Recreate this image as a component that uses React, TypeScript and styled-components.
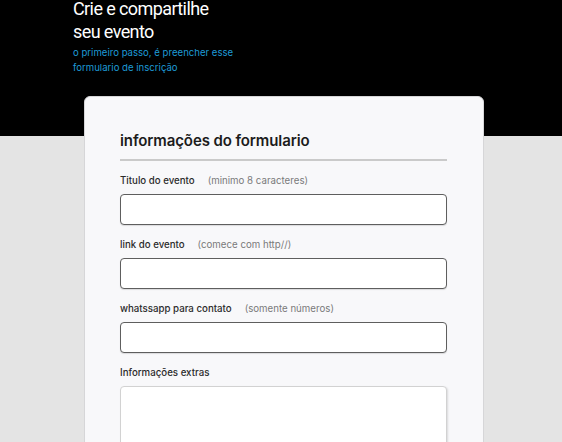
import styled, { createGlobalStyle } from 'styled-components';

const GlobalStyle = createGlobalStyle`
  html, body {
    margin: 0;
    padding: 0;
    background: #e4e4e4;
    font-family: Inter, 'Noto Sans', sans-serif;
    overflow: hidden;
  }
  * {
    box-sizing: border-box;
  }
`;

interface Field {
  label: string;
  hint?: string;
  multiline?: boolean;
}

const fields: Field[] = [
  { label: 'Titulo do evento', hint: '(minimo 8 caracteres)' },
  { label: 'link do evento', hint: '(comece com http//)' },
  { label: 'whatssapp para contato', hint: '(somente números)' },
  { label: 'Informações extras', multiline: true },
];

export default function App() {
  return (
    <Page>
      <GlobalStyle />
      <Hero>
        <HeroTitle>
          Crie e compartilhe
          <br />
          seu evento
        </HeroTitle>
        <HeroSubtitle>
          o primeiro passo, é preencher esse
          <br />
          formulario de inscrição
        </HeroSubtitle>
      </Hero>

      <Main>
        <Card>
          <CardTitle>informações do formulario</CardTitle>
          <Divider />
          {fields.map((field) => (
            <FieldGroup key={field.label}>
              <Label>
                {field.label}
                {field.hint && <Hint>{field.hint}</Hint>}
              </Label>
              {field.multiline ? <TextArea /> : <Input type='text' />}
            </FieldGroup>
          ))}
        </Card>
      </Main>
    </Page>
  );
}

const Page = styled.div`
  width: 562px;
  height: 442px;
  overflow: hidden;
`;

const Hero = styled.header`
  background: #000;
  height: 136px;
  padding-left: 73px;
  display: flex;
  flex-direction: column;
`;

const HeroTitle = styled.div`
  font-family: Roboto, 'Liberation Sans', Arial, sans-serif;
  font-weight: 400;
  font-size: 18px;
  line-height: 23px;
  letter-spacing: -0.6px;
  color: #fff;
  margin-top: -3px;
`;

const HeroSubtitle = styled.p`
  font-family: Inter, 'Noto Sans', sans-serif;
  font-size: 9.6px;
  line-height: 14.5px;
  color: #1e9bd7;
  margin: 3px 0 0;
`;

const Main = styled.main`
  padding-left: 84px;
  margin-top: -40px;
  position: relative;
`;

const Card = styled.section`
  width: 400px;
  min-height: 400px;
  background: #f8f8fa;
  border: 1px solid #d6d6d8;
  border-radius: 6px;
  padding: 34px 36px 0 35px;
  display: flex;
  flex-direction: column;
`;

const CardTitle = styled.h2`
  font-size: 15px;
  line-height: 20px;
  font-weight: 600;
  color: #1c1c1c;
  margin: 0;
  letter-spacing: -0.1px;
`;

const Divider = styled.hr`
  border: none;
  height: 2px;
  background: #cacaca;
  margin: 8px 0 14px;
  width: 100%;
`;

const FieldGroup = styled.div`
  display: flex;
  flex-direction: column;
  margin-bottom: 14px;
`;

const Label = styled.label`
  font-size: 9.7px;
  line-height: 12px;
  font-weight: 500;
  color: #2b2b2b;
  margin-bottom: 7px;
`;

const Hint = styled.span`
  color: #7a7a7a;
  font-weight: 400;
  margin-left: 13px;
`;

const Input = styled.input`
  height: 31px;
  width: 100%;
  background: #fff;
  border: 1px solid #5e5e5e;
  border-radius: 4px;
  box-shadow: 0 1px 1px rgba(0, 0, 0, 0.12);
  outline: none;
`;

const TextArea = styled.textarea`
  height: 90px;
  width: 100%;
  background: #fff;
  border: 1px solid #d2d2d2;
  border-radius: 4px;
  box-shadow: 1px 1px 2px rgba(0, 0, 0, 0.12);
  resize: none;
  outline: none;
`;
